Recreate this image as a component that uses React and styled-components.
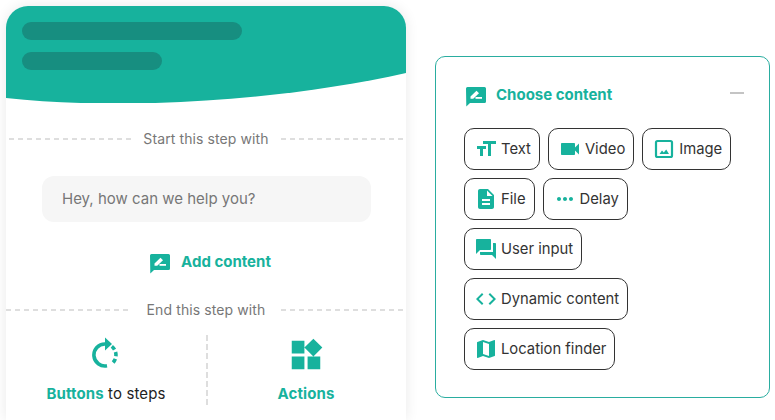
import React from "react";
import styled, { createGlobalStyle } from "styled-components";
import {
  MdCode,
  MdDescription,
  MdFormatSize,
  MdMap,
  MdMoreHoriz,
  MdQuestionAnswer,
  MdVideocam,
  MdWidgets,
} from "react-icons/md";

const GREEN = "#17b29d";

const GlobalStyle = createGlobalStyle`
  html, body {
    margin: 0;
    height: 420px;
    overflow: hidden;
    background: #fff;
    font-family: "Inter", "Liberation Sans", sans-serif;
  }
`;

const Page = styled.div`
  display: flex;
  align-items: flex-start;
  gap: 29px;
  padding: 6px 0 0 6px;
`;

const Phone = styled.section`
  width: 400px;
  height: 414px;
  flex: none;
  background: #fff;
  border-radius: 22px 22px 0 0;
  box-shadow: 0 0 14px rgba(0, 0, 0, 0.09);
  overflow: hidden;
`;

const Header = styled.header`
  position: relative;
  height: 97px;
  padding: 16px;
  box-sizing: border-box;
  display: flex;
  flex-direction: column;
  gap: 12px;
`;

const Wave = styled.svg`
  position: absolute;
  inset: 0;
  width: 400px;
  height: 97px;
`;

const Pill = styled.div`
  position: relative;
  width: ${(p) => p.$w}px;
  height: 18px;
  border-radius: 9px;
  background: #178e80;
`;

const Divider = styled.div`
  display: flex;
  align-items: center;
  height: 20px;
  margin: ${(p) => p.$top}px 0 0;
  padding: 0 ${(p) => p.$inset}px;
  color: #777;
  font-size: 14px;
  letter-spacing: 0.1px;
  white-space: nowrap;
`;

const DashLine = styled.span`
  flex: 1;
  height: 2px;
  background: repeating-linear-gradient(90deg, #dedede 0 5px, transparent 5px 9px);
`;

const DividerLabel = styled.span`
  padding: 0 ${(p) => p.$gap}px;
  margin-bottom: 2px;
`;

const Prompt = styled.div`
  margin: 27px 35px 0 36px;
  height: 46px;
  box-sizing: border-box;
  display: flex;
  align-items: center;
  padding: 0 0 2px 20px;
  background: #f6f6f6;
  border-radius: 12px;
  color: #777;
  font-size: 15px;
`;

const AddRow = styled.div`
  display: flex;
  align-items: center;
  justify-content: center;
  gap: 11px;
  margin: 32px 0 0 9px;
  height: 20px;
  color: ${GREEN};
  font-size: 15px;
  font-weight: 700;
`;

const RaisedLabel = styled.span`
  margin-bottom: 6px;
`;

const EndGrid = styled.div`
  display: grid;
  grid-template-columns: 200px 200px;
  margin-top: 15px;
  height: 70px;
`;

const EndCell = styled.div`
  display: flex;
  flex-direction: column;
  align-items: center;
  font-size: 15px;
  letter-spacing: 0.12px;
  color: #222;
  background: ${(p) =>
    p.$split
      ? "repeating-linear-gradient(180deg, #dedede 0 6px, transparent 6px 9.2px) left top / 2px 100% no-repeat"
      : "none"};
`;

const EndIcon = styled.div`
  height: 48px;
  padding-top: 1px;
  display: flex;
  align-items: flex-start;
  justify-content: center;
  color: ${GREEN};
`;

const Strong = styled.strong`
  color: ${GREEN};
  font-weight: 700;
`;

const Panel = styled.section`
  width: 335px;
  height: 342px;
  box-sizing: border-box;
  flex: none;
  margin-top: 50px;
  padding: 28px 25px 0 28px;
  border: 1px solid #2aada0;
  border-radius: 10px;
`;

const PanelHead = styled.div`
  display: flex;
  align-items: center;
  gap: 10px;
  height: 24px;
  padding-left: 2px;
  color: ${GREEN};
  font-size: 15px;
  font-weight: 700;
`;

const Collapse = styled.span`
  margin-left: auto;
  width: 14px;
  height: 2px;
  margin-bottom: 8px;
  background: #c4c4c4;
`;

const ChipList = styled.div`
  display: flex;
  flex-wrap: wrap;
  gap: 8px;
  margin-top: 19px;
`;

const Chip = styled.button`
  display: inline-flex;
  align-items: center;
  gap: 3px;
  height: 42px;
  padding: 0 8px 0 9px;
  box-sizing: border-box;
  background: #fff;
  border: 1px solid #333;
  border-radius: 10px;
  color: #333;
  font: 400 14.8px "Inter", "Liberation Sans", sans-serif;
  svg {
    flex: none;
    color: ${GREEN};
  }
`;

const ChipLabel = styled.span`
  margin-bottom: 1px;
`;

const BubbleIcon = () => (
  <svg width="20" height="20" viewBox="0 0 20 20">
    <path
      d="M1.5 0 H18.5 A1.5 1.5 0 0 1 20 1.5 V14.5 A1.5 1.5 0 0 1 18.5 16 H4 L0.3 19.4 L0 1.5 A1.5 1.5 0 0 1 1.5 0 Z"
      fill={GREEN}
    />
    <path d="M4.5 9.5 L10.5 3.8 L13 6.2 L7.2 11.8 H4.5 Z" fill="#fff" />
    <path d="M9.5 10 H16 V11.8 H9.5 Z" fill="#fff" />
  </svg>
);

const PictureIcon = () => (
  <svg width="24" height="24" viewBox="0 0 24 24" fill="none">
    <rect x="4" y="4" width="16" height="16" rx="1.5" stroke="currentColor" strokeWidth="2.2" />
    <path d="M7.5 17 L10 13.6 L11.8 15.4 L14.2 12.6 L17 17 Z" fill="currentColor" />
  </svg>
);

const LoopIcon = () => (
  <svg width="32" height="32" viewBox="0 0 32 32" fill="none">
    <path d="M15 8 A 11 11 0 1 0 17 29.8" stroke={GREEN} strokeWidth="3.6" />
    <path d="M15 1.5 L22 8 L15 14.5 Z" fill={GREEN} />
    <path
      d="M21.8 10.4 A 11 11 0 0 1 21.5 27.9"
      stroke={GREEN}
      strokeWidth="3.6"
      strokeDasharray="4.2 2.6"
    />
  </svg>
);

const chips = [
  ["Text", MdFormatSize],
  ["Video", MdVideocam],
  ["Image", PictureIcon],
  ["File", MdDescription],
  ["Delay", MdMoreHoriz],
  ["User input", MdQuestionAnswer],
  ["Dynamic content", MdCode],
  ["Location finder", MdMap],
];

export default function App() {
  return (
    <>
      <GlobalStyle />
      <Page>
        <Phone>
          <Header>
            <Wave viewBox="0 0 400 97">
              <path d="M0 0 H400 V67 C290 92 130 106 0 92 Z" fill={GREEN} />
            </Wave>
            <Pill $w={220} />
            <Pill $w={140} />
          </Header>
          <Divider $top={26} $inset={3}>
            <DashLine />
            <DividerLabel $gap={12}>Start this step with</DividerLabel>
            <DashLine />
          </Divider>
          <Prompt>Hey, how can we help you?</Prompt>
          <AddRow>
            <BubbleIcon />
            <RaisedLabel>Add content</RaisedLabel>
          </AddRow>
          <Divider $top={26} $inset={0}>
            <DashLine />
            <DividerLabel $gap={16}>End this step with</DividerLabel>
            <DashLine />
          </Divider>
          <EndGrid>
            <EndCell>
              <EndIcon>
                <LoopIcon />
              </EndIcon>
              <span>
                <Strong>Buttons</Strong> to steps
              </span>
            </EndCell>
            <EndCell $split>
              <EndIcon>
                <MdWidgets size={38} />
              </EndIcon>
              <Strong>Actions</Strong>
            </EndCell>
          </EndGrid>
        </Phone>
        <Panel>
          <PanelHead>
            <BubbleIcon />
            <RaisedLabel>Choose content</RaisedLabel>
            <Collapse />
          </PanelHead>
          <ChipList>
            {chips.map(([label, Icon]) => (
              <Chip key={label}>
                <Icon size={24} />
                <ChipLabel>{label}</ChipLabel>
              </Chip>
            ))}
          </ChipList>
        </Panel>
      </Page>
    </>
  );
}
